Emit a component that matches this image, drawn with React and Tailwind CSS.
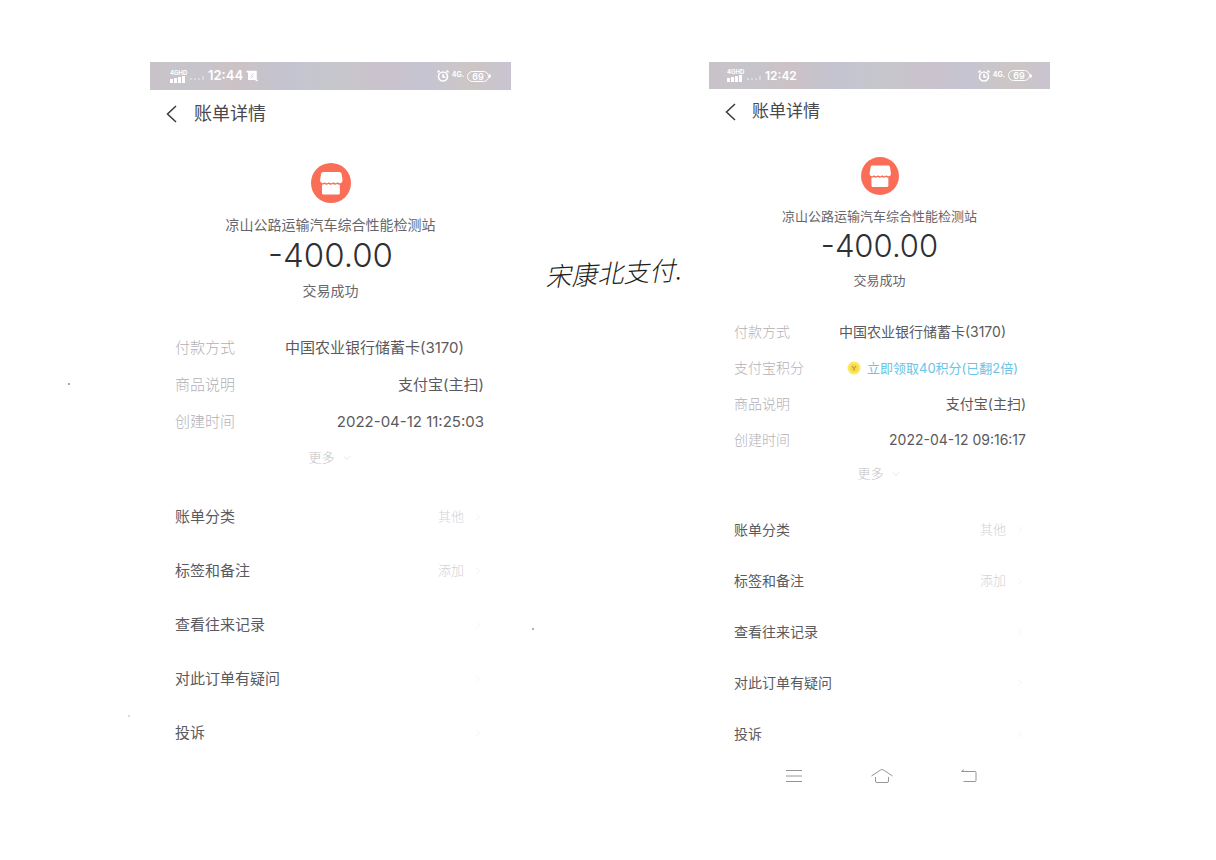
import { ChevronRight, ChevronDown } from 'lucide-react'

const leftBill = {
    time: "12:44",
    muted: true,
    rows: [
        { label: "付款方式", value: "中国农业银行储蓄卡(3170)", pad: "pr-5" },
        { label: "商品说明", value: "支付宝(主扫)" },
        { label: "创建时间", value: "2022-04-12 11:25:03" },
    ],
};

const rightBill = {
    time: "12:42",
    muted: false,
    rows: [
        { label: "付款方式", value: "中国农业银行储蓄卡(3170)", pad: "pr-5" },
        { label: "支付宝积分", value: "立即领取40积分(已翻2倍)", pad: "pr-2", points: true },
        { label: "商品说明", value: "支付宝(主扫)" },
        { label: "创建时间", value: "2022-04-12 09:16:17" },
    ],
};

const menu = [
    { label: "账单分类", hint: "其他" },
    { label: "标签和备注", hint: "添加" },
    { label: "查看往来记录" },
    { label: "对此订单有疑问" },
    { label: "投诉" },
];

// the right print is a little smaller than the left one
const large = {
    bar: "h-7 px-5",
    time: "text-[13px]",
    header: "h-12 pl-4 gap-4",
    title: "text-lg",
    shop: "mt-[25px] size-10",
    name: "mt-3 text-sm",
    amount: "text-[33px]",
    state: "mt-1.5 text-sm",
    details: "mt-[29px] pl-[25px] pr-[27px] text-[15px]",
    row: "h-[37px]",
    more: "h-[34px]",
    list: "mt-[15px] pl-[25px] pr-[27px] text-[15px]",
    item: "h-[54px]",
};

const small = {
    bar: "h-[27px] pl-[18px] pr-[18px]",
    time: "text-xs",
    header: "h-[46px] pl-4 gap-[15px]",
    title: "text-[17px]",
    shop: "mt-[22px] size-[38px]",
    name: "mt-[11px] text-[13px]",
    amount: "text-[31px]",
    state: "mt-1 text-[13px]",
    details: "mt-6 pl-[25px] pr-6 text-sm",
    row: "h-9",
    more: "h-8",
    list: "mt-3.5 pl-[25px] pr-6 text-sm",
    item: "h-[51px]",
};

function Signal()
{
    return (
        <div className="flex flex-col w-4">
            <span className="text-[6px] leading-[6px] font-bold">4GHD</span>
            <svg className="w-4 h-[7px]" viewBox="0 0 16 7" fill="currentColor">
                <rect x="0" y="3" width="3" height="4" />
                <rect x="4" y="2" width="3" height="5" />
                <rect x="8" y="1" width="3" height="6" />
                <rect x="12" y="0" width="3" height="7" />
            </svg>
        </div>
    );
}

function StatusBar({ bill, size })
{
    return (
        <div className={`flex items-center justify-between text-white bg-[linear-gradient(90deg,#c9c3c9,#c6c5cb_12%,#ccc2c6_24%,#c3c4d0_38%,#c6c7cc_50%,#cbc2cc_64%,#c5c4d2_76%,#ccc6c5_88%,#c9c4d0)] ${size.bar}`}>
            <div className="flex items-center gap-[3px]">
                <Signal />
                <svg className="w-4 h-2 opacity-35" viewBox="0 0 16 8" fill="currentColor">
                    <rect x="1" y="6" width="2" height="2" />
                    <rect x="5" y="6" width="2" height="2" />
                    <rect x="9" y="6" width="2" height="2" />
                    <rect x="13" y="4" width="2" height="4" />
                </svg>
                <span className={`font-semibold ${size.time}`}>{bill.time}</span>
                {bill.muted && (
                    <svg className="size-3" viewBox="0 0 12 12" fill="none" stroke="currentColor">
                        <rect x="2.500" y="2.500" width="7" height="7" fill="currentColor" />
                        <path d="M0.500 1.500h9.500v9M1 1l10.500 10" strokeWidth="1.500" />
                        <path d="M4.500 6l3-2.500M4.500 8l3-2" stroke="#c5c3d0" strokeWidth="0.800" />
                    </svg>
                )}
            </div>
            <div className="flex items-center gap-[3px]">
                <svg className="size-3" viewBox="0 0 12 12" fill="none" stroke="currentColor" strokeWidth="1.600">
                    <circle cx="6" cy="6.500" r="4.500" />
                    <path d="M6 4v3h2.500M0.500 2.500l2-2M11.500 2.500l-2-2" />
                </svg>
                <span className="self-start text-[7px] leading-[9px] font-bold">4G.</span>
                <span className="flex items-center">
                    <span className="flex items-center justify-center w-[22px] h-[11px] rounded-full border border-white text-[9px] leading-none font-semibold">69</span>
                    <span className="w-0.5 h-1 bg-white rounded-r-sm"></span>
                </span>
            </div>
        </div>
    );
}

function ShopIcon({ size })
{
    return (
        <svg className={size} viewBox="0 0 40 40">
            <circle cx="20" cy="20" r="20" fill="#fa6e58" />
            <path d="M12 9h16.500q1.500 0 2 1.500l1 6.500q0 3-2.500 3.300q-1.300 0-2.200-1q-2.200 2-4.400 0q-2.200 2-4.400 0q-2.200 2-4.400 0q-1 1-2.200 1q-2.400-.3-2.400-3l1.200-6.800q.3-1.500 1.800-1.500z" fill="#fff" />
            <path d="M11 21.800q1.300 0 2.300-.7q2 1.500 4.200 0q2.200 1.500 4.300 0q2.200 1.500 4.200 0q1 .7 2.800.7v8.500q0 1.200-1.200 1.200h-15.400q-1.200 0-1.200-1.200z" fill="#fff" />
        </svg>
    );
}

function Coin()
{
    return (
        <svg className="size-3.5" viewBox="0 0 14 14" fill="none">
            <circle cx="7" cy="7" r="6.500" fill="#fae95c" />
            <circle cx="7" cy="7" r="4" fill="#f8d84a" />
            <path d="M5 5l2 2.500l2-2.500M7 7.500v2" stroke="#c87f3a" />
        </svg>
    );
}

function Bill({ bill, size })
{
    return (
        <section className="flex flex-col min-w-0">
            <StatusBar bill={bill} size={size} />

            <header className={`flex items-center ${size.header}`}>
                <button aria-label="返回">
                    <svg className="w-3 h-[18px] text-[#3a3a3e]" viewBox="0 0 12 18" fill="none" stroke="currentColor" strokeWidth="1.500">
                        <path d="M10 1l-8.500 8l8.500 8" />
                    </svg>
                </button>
                <h1 className={`text-[#48484d] ${size.title}`}>账单详情</h1>
            </header>

            <div className="flex flex-col items-center text-[#66666b]">
                <ShopIcon size={size.shop} />
                <p className={`leading-5 whitespace-nowrap ${size.name}`}>凉山公路运输汽车综合性能检测站</p>
                <p className={`leading-10 font-light text-[#2f2f34] ${size.amount}`}>-400.00</p>
                <p className={`leading-5 ${size.state}`}>交易成功</p>
            </div>

            <dl className={size.details}>
                {bill.rows.map((row) => (
                    <div key={row.label} className={`flex items-center justify-between whitespace-nowrap ${size.row}`}>
                        <dt className="font-light text-[#b3b0b6]">{row.label}</dt>
                        <dd className={`text-[#5a5a60] ${row.pad || ""}`}>
                            {row.points ? (
                                <a href="#" className="flex items-center gap-1.5 text-[13px] text-[#6ac4e6]"><Coin />{row.value}</a>
                            ) : row.value}
                        </dd>
                    </div>
                ))}
            </dl>

            <button className={`flex items-center justify-center gap-1.5 font-light text-[13px] text-[#c4c2c7] ${size.more}`}>
                更多
                <ChevronDown className="size-3 text-[#dddbe0]" strokeWidth={1.5} />
            </button>

            <nav className={size.list}>
                {menu.map((item) => (
                    <a key={item.label} href="#" className={`flex items-center text-[#5a5a60] ${size.item}`}>
                        <span className="grow">{item.label}</span>
                        <span className="font-light text-[13px] text-[#d3d1d6]">{item.hint}</span>
                        <ChevronRight className="ml-2 size-3 text-[#f0eef2]" strokeWidth={1.5} />
                    </a>
                ))}
            </nav>
        </section>
    );
}

function SystemKeys()
{
    return (
        <div className="flex items-center justify-between h-[34px] pl-[77px] pr-[73px] text-[#96969a]">
            <button aria-label="任务">
                <svg className="w-4 h-3.5" viewBox="0 0 16 14" fill="none" stroke="currentColor">
                    <path d="M0 1.500h16M0 7h16M0 12.500h16" />
                </svg>
            </button>
            <button aria-label="主页">
                <svg className="w-[22px] h-4" viewBox="0 0 22 16" fill="none" stroke="currentColor">
                    <path d="M0.500 8l9-6q1.500-1 3 0l9 6M4.500 9v4q0 1.500 1.500 1.500h10q1.500 0 1.500-1.500v-4" />
                </svg>
            </button>
            <button aria-label="后退">
                <svg className="w-4 h-3.5" viewBox="0 0 16 14" fill="none" stroke="currentColor">
                    <path d="M3 0.500l-2.500 2h13.500q1 0 1 1v8q0 1-1 1h-11.500" />
                </svg>
            </button>
        </div>
    );
}

function App()
{
    return (
        <main className="relative grid grid-cols-[150fr_361fr_198fr_341fr_166fr] min-h-screen pt-[62px] bg-white font-['Inter','Noto_Sans_CJK_SC',sans-serif]">
            <div></div>
            <Bill bill={leftBill} size={large} />
            <div className="flex justify-center pt-48 pl-2">
                {/* handwritten note between the two bills */}
                <p className="h-10 -rotate-3 italic font-light text-[26px] leading-10 whitespace-nowrap text-[#1e1e20]">宋康北支付.</p>
            </div>
            <div className="min-w-0">
                <Bill bill={rightBill} size={small} />
                <SystemKeys />
            </div>

            {/* dust on the paper */}
            <span className="absolute left-[68px] top-[383px] size-0.5 rounded-full bg-[#8a8a8a]"></span>
            <span className="absolute left-[532px] top-[628px] size-0.5 rounded-full bg-[#9a9a9a]"></span>
            <span className="absolute left-[128px] top-[715px] size-0.5 rounded-full bg-[#cfcfcf]"></span>
        </main>
    );
}

export default App
